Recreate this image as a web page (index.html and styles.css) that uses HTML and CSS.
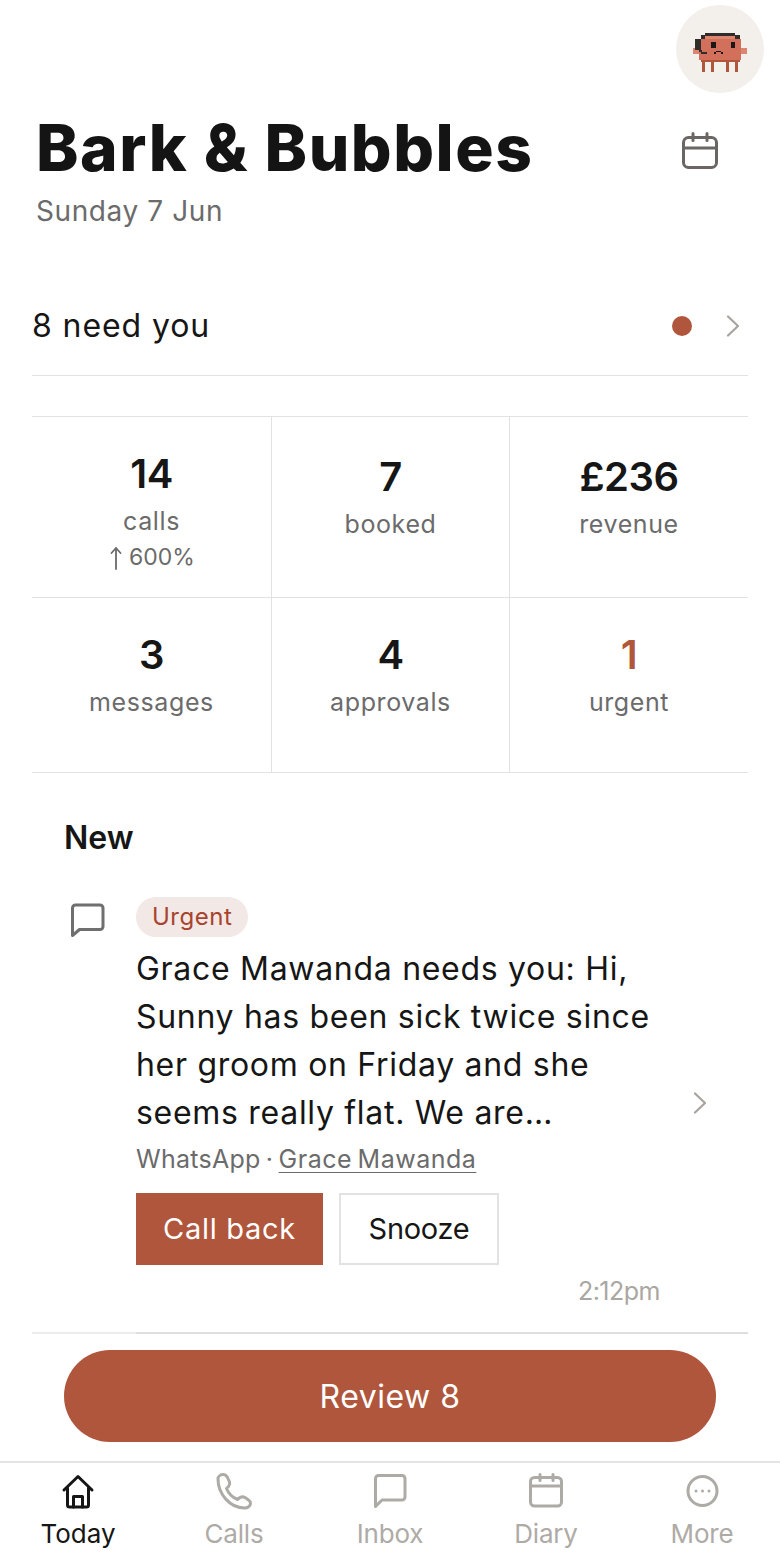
FILE: index.html
```html
<!DOCTYPE html>
<html lang="en">
<head>
<meta charset="utf-8">
<title>Bark &amp; Bubbles</title>
<link rel="stylesheet" href="styles.css">
</head>
<body>
<div class="app">
  <main class="main">
    <div class="topbar">
      <div class="avatar">
        <svg class="avatar-art" width="54" height="39" viewBox="693 33 54 39" shape-rendering="crispEdges">
          <rect x="693" y="48" width="6" height="6" fill="#dc8672"/>
          <rect x="741" y="48" width="6" height="6" fill="#dc8672"/>
          <rect x="702" y="60" width="3" height="12" fill="#b0563c"/>
          <rect x="711" y="60" width="3" height="12" fill="#b0563c"/>
          <rect x="726" y="60" width="3" height="12" fill="#b0563c"/>
          <rect x="735" y="60" width="3" height="12" fill="#b0563c"/>
          <rect x="699" y="39" width="42" height="21" fill="#d2705c"/>
          <rect x="701" y="60" width="39" height="2" fill="#b0563c"/>
          <rect x="705" y="36" width="30" height="3" fill="#dc8672"/>
          <rect x="705" y="33" width="30" height="3" fill="#2f2c2a"/>
          <rect x="701" y="35" width="4" height="4" fill="#2f2c2a"/>
          <rect x="735" y="35" width="5" height="4" fill="#2f2c2a"/>
          <rect x="695" y="39" width="6" height="11" fill="#2f2c2a"/>
          <rect x="699" y="50" width="3" height="2" fill="#2f2c2a"/>
          <rect x="701" y="52" width="6" height="2" fill="#2f2c2a"/>
          <rect x="711" y="42" width="5" height="6" fill="#1a1716"/>
          <rect x="731" y="42" width="4" height="6" fill="#1a1716"/>
          <rect x="716" y="51" width="5" height="1" fill="#1a1716"/>
          <rect x="714" y="52" width="2" height="2" fill="#1a1716"/>
          <rect x="721" y="52" width="2" height="2" fill="#1a1716"/>
        </svg>
      </div>
    </div>

    <header class="header">
      <div>
        <h1 class="title">Bark &amp; Bubbles</h1>
        <p class="date">Sunday 7 Jun</p>
      </div>
      <svg class="header-cal" width="40" height="40" viewBox="0 0 40 40" fill="none" stroke="#6b6663" stroke-width="3" stroke-linecap="round" stroke-linejoin="round">
        <rect x="3.500" y="5.500" width="33" height="30" rx="5"/>
        <path d="M3.500 16h33M13 1.500v7M27 1.500v7"/>
      </svg>
    </header>

    <section class="needs">
      <span class="needs-text">8 need you</span>
      <span class="needs-side">
        <span class="dot"></span>
        <svg class="chev" width="14" height="22" viewBox="0 0 14 22" fill="none" stroke="#a8a39d" stroke-width="2.200" stroke-linecap="round" stroke-linejoin="round"><path d="M2 1.500 12 11 2 20.500"/></svg>
      </span>
    </section>

    <section class="stats">
      <div class="stat stat-top stat-three"><b class="num">14</b><span class="lab">calls</span><span class="lab trend"><svg class="arrow" width="12" height="24" viewBox="0 0 12 24" fill="none" stroke="#6b6b6b" stroke-width="1.800" stroke-linecap="round" stroke-linejoin="round"><path d="M6 23V2M1.500 7 6 2l4.500 5"/></svg>600%</span></div>
      <div class="stat stat-top"><b class="num">7</b><span class="lab">booked</span></div>
      <div class="stat stat-top stat-end"><b class="num">£236</b><span class="lab">revenue</span></div>
      <div class="stat"><b class="num">3</b><span class="lab">messages</span></div>
      <div class="stat"><b class="num">4</b><span class="lab">approvals</span></div>
      <div class="stat stat-end"><b class="num urgent-num">1</b><span class="lab">urgent</span></div>
    </section>

    <h2 class="new">New</h2>

    <article class="item">
      <svg class="item-icon" width="36" height="36" viewBox="0 0 36 36" fill="none" stroke="#6f6f6f" stroke-width="3" stroke-linecap="round" stroke-linejoin="round">
        <path d="M2.500 5a3 3 0 0 1 3-3h24.500a3 3 0 0 1 3 3v18.500a3 3 0 0 1-3 3H9.500l-7 6z"/>
      </svg>
      <div class="item-body">
        <span class="pill">Urgent</span>
        <p class="msg">Grace Mawanda needs you: Hi, Sunny has been sick twice since her groom on Friday and she seems really flat. We are…</p>
        <p class="meta">WhatsApp · <a class="meta-link">Grace Mawanda</a></p>
        <div class="actions">
          <button class="btn btn-primary">Call back</button>
          <button class="btn btn-outline">Snooze</button>
        </div>
        <div class="time">2:12pm</div>
      </div>
      <svg class="item-chev" width="14" height="22" viewBox="0 0 14 22" fill="none" stroke="#a8a39d" stroke-width="2.200" stroke-linecap="round" stroke-linejoin="round"><path d="M2 1.500 12 11 2 20.500"/></svg>
    </article>
    <div class="divider"></div>
  </main>

  <div class="cta-wrap"><button class="cta">Review 8</button></div>

  <nav class="nav">
    <a class="tab tab-active">
      <svg width="40" height="40" viewBox="0 0 40 40" fill="none" stroke="currentColor" stroke-width="3" stroke-linecap="round" stroke-linejoin="round">
        <path d="M6 18 20 4.500 34 18M9.500 15.500V33a2 2 0 0 0 2 2h17a2 2 0 0 0 2-2V15.500"/><path d="M15.500 35V24.500h9V35"/>
      </svg>
      <span>Today</span>
    </a>
    <a class="tab">
      <svg width="40" height="40" viewBox="0 0 40 40" fill="none" stroke="currentColor" stroke-width="3" stroke-linecap="round" stroke-linejoin="round">
        <path d="M4 7C4 4 7 2.500 9 2.500c2 0 3.500 1 4.500 3l2 4.500c.8 2 0 3-1 4.500l-2 2c2 5 6 9 11 11l2.500-2c2-1 3-1 5 0l3.500 2.500c1.500 1 2 2 2 3.500 0 2.500-3 4.500-6 4.500C16 36 4 22 4 7z"/>
      </svg>
      <span>Calls</span>
    </a>
    <a class="tab">
      <svg width="40" height="40" viewBox="0 0 40 40" fill="none" stroke="currentColor" stroke-width="3" stroke-linecap="round" stroke-linejoin="round">
        <path d="M5.500 6.500a3 3 0 0 1 3-3h23.500a3 3 0 0 1 3 3v18.500a3 3 0 0 1-3 3H12l-6.500 6.500z"/>
      </svg>
      <span>Inbox</span>
    </a>
    <a class="tab">
      <svg width="40" height="40" viewBox="0 0 40 40" fill="none" stroke="currentColor" stroke-width="3" stroke-linecap="round" stroke-linejoin="round">
        <rect x="4.500" y="5.500" width="31" height="28.500" rx="4"/><path d="M4.500 14h31M14 2.500v6M27 2.500v6"/>
      </svg>
      <span>Diary</span>
    </a>
    <a class="tab">
      <svg width="40" height="40" viewBox="0 0 40 40" fill="none" stroke="currentColor" stroke-width="3" stroke-linecap="round" stroke-linejoin="round">
        <circle cx="20.500" cy="19" r="14.500"/><path d="M14 19h.01M20.500 19h.01M27 19h.01"/>
      </svg>
      <span>More</span>
    </a>
  </nav>
</div>
</body>
</html>
```

FILE: styles.css
```css
* { box-sizing: border-box; }
html, body { margin: 0; padding: 0; background: #fff; }
body { font-family: Inter, "Noto Sans", sans-serif; color: #161616; }
.app { width: 780px; height: 1560px; display: flex; flex-direction: column; overflow: hidden; }
.main { flex: 1; min-height: 0; overflow: hidden; padding-top: 5px; }

.topbar { display: flex; justify-content: flex-end; padding-right: 16px; }
.avatar { width: 88px; height: 88px; border-radius: 50%; background: #f3f0ec; display: flex; align-items: center; justify-content: center; padding-top: 7px; }

.header { display: flex; justify-content: space-between; align-items: flex-start; padding: 18px 60px 0 36px; }
.title { margin: 0; font-size: 64px; line-height: 74px; font-weight: 800; letter-spacing: 1.55px; color: #141414; }
.date { margin: 8px 0 0; font-size: 28px; line-height: 36px; letter-spacing: 0.6px; color: #6b6b6b; }
.header-cal { margin-top: 21px; }

.needs { margin: 46px 32px 0; height: 101px; display: flex; align-items: center; justify-content: space-between; border-bottom: 1px solid #e2e2e2; }
.needs-text { font-size: 32px; letter-spacing: 0.9px; }
.needs-side { display: flex; align-items: center; gap: 34px; padding-right: 8px; margin-top: 2px; }
.dot { width: 20px; height: 20px; border-radius: 50%; background: #b0563c; }
.chev { display: block; }

.stats { margin: 40px 32px 0; display: grid; grid-template-columns: 240px 238px 238px; border-top: 1px solid #e2e2e2; border-bottom: 1px solid #e2e2e2; }
.stat { height: 174px; padding-top: 27px; display: flex; flex-direction: column; align-items: center; border-right: 1px solid #e2e2e2; }
.stat-top { height: 181px; padding-top: 30px; border-bottom: 1px solid #e2e2e2; }
.stat-three { padding-top: 27px; }
.stat-end { border-right: 0; }
.num { font-size: 40px; line-height: 59px; font-weight: 600; letter-spacing: -0.5px; }
.urgent-num { color: #b0563c; }
.lab { font-size: 25px; line-height: 36px; letter-spacing: 0.6px; color: #6b6b6b; }
.trend { display: flex; align-items: center; gap: 7px; padding-left: 2px; font-size: 23px; letter-spacing: 0; }
.arrow { display: block; margin-top: 2px; }

.new { margin: 44px 0 0 64px; font-size: 32px; line-height: 42px; font-weight: 600; }

.item { display: flex; padding: 38px 32px 0 70px; position: relative; }
.item-icon { margin-top: 6px; flex: none; }
.item-body { margin-left: 30px; flex: 1; }
.pill { display: inline-block; height: 40px; line-height: 40px; padding: 0 16px; border-radius: 20px; background: #f2e8e5; color: #a8432e; font-size: 24px; letter-spacing: 0.5px; }
.msg { margin: 8px 0 0; width: 540px; font-size: 32px; line-height: 48px; letter-spacing: 0.7px; color: #161616; }
.meta { margin: 2px 0 0; font-size: 25px; line-height: 40px; letter-spacing: 0.26px; word-spacing: -2px; color: #6b6b6b; }
.meta-link { text-decoration: underline; text-underline-offset: 4px; text-decoration-thickness: 1px; letter-spacing: 0.5px; }
.actions { display: flex; gap: 16px; margin-top: 14px; }
.btn { height: 72px; font-family: inherit; font-size: 29px; border: 0; padding: 0 0 2px; }
.btn-primary { width: 187px; background: #b0563c; color: #fff; letter-spacing: 0.7px; }
.btn-outline { width: 160px; background: #fff; border: 2px solid #e2e2e2; color: #161616; letter-spacing: -0.3px; }
.time { margin-top: 10px; width: 524px; text-align: right; font-size: 25px; line-height: 32px; letter-spacing: -0.5px; color: #aaa7a2; }
.item-chev { position: absolute; left: 693px; top: 233px; }

.divider { margin: 25px 32px 0; height: 2px; background: linear-gradient(to right, #ececec 104px, #dedede 104px); }

.cta-wrap { padding: 0 64px 19px; }
.cta { width: 100%; height: 92px; border: 0; border-radius: 46px; background: #b0563c; color: #fff; font-family: inherit; font-size: 32px; letter-spacing: 0.5px; }

.nav { height: 99px; border-top: 2px solid #e4e4e4; display: grid; grid-template-columns: repeat(5, 156px); }
.tab { display: flex; flex-direction: column; align-items: center; padding-top: 9px; color: #aeaba6; font-size: 26px; line-height: 36px; letter-spacing: -0.2px; }
.tab svg { display: block; margin-bottom: 4px; }
.tab-active { color: #161616; letter-spacing: 0; }
```
